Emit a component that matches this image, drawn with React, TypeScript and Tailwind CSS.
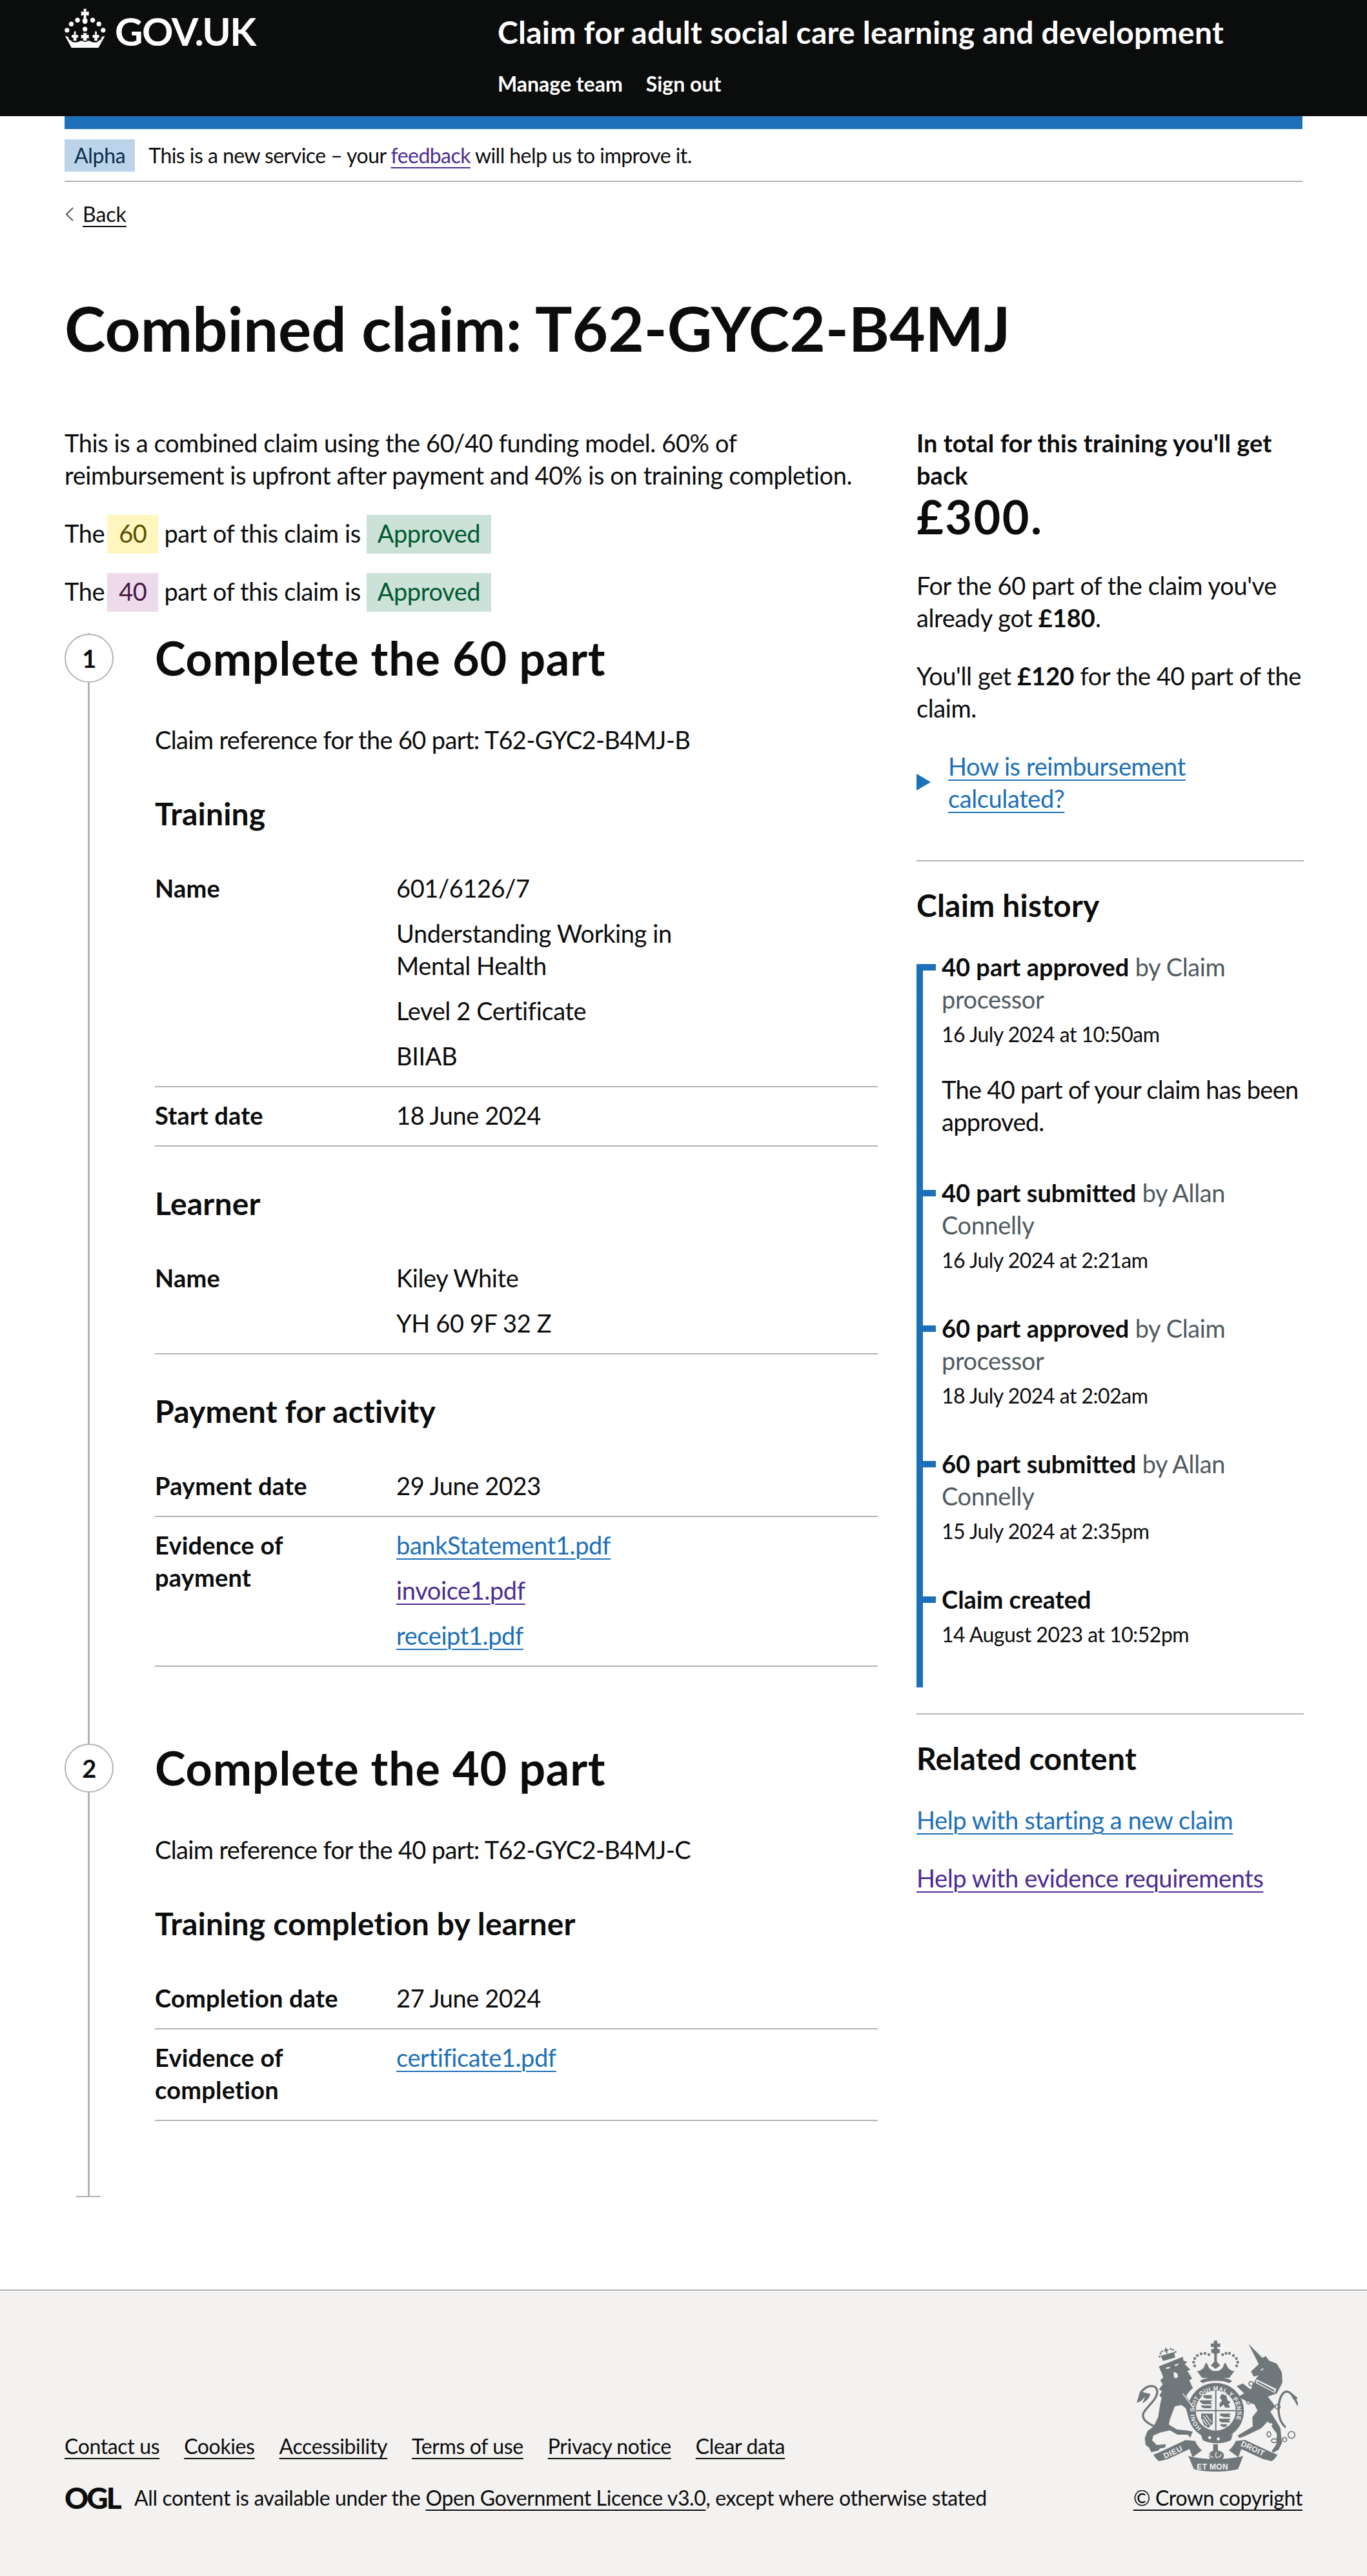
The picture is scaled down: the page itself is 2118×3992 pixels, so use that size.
import React from "react";

const font = { fontFamily: "Lato, 'Noto Sans', Arial, sans-serif" };
const C = "#6f777b";
const BG = "#f3f2f1";

const Crown = () => (
  <svg width="65" height="63" viewBox="30 20 195 190" className="shrink-0">
    <g fill="#fff">
      <path d="M118 25h14l-2 14 13-2v20l-13-2 2 14h-14l2-14-13 2V37l13 2z" />
      <ellipse cx="125" cy="82" rx="12" ry="14" />
      {[[90, 78], [161, 78], [61, 96], [190, 96], [41, 125], [210, 125], [125, 120]].map(([x, y]) => (
        <circle key={`${x}-${y}`} cx={x} cy={y} r="11" />
      ))}
      <path d="M116 138h18l-2 10 11-2v18l-11-2 2 12h-18l2-12-11 2v-18l11 2z" />
      <path d="M78 128c6 6 6 14 2 20 6-4 14-2 14 6 0 6-6 8-10 6l2 14h-16l2-14c-4 2-10 0-10-6 0-8 8-10 14-6-4-6-4-14 2-20z" />
      <path d="M176 128c6 6 6 14 2 20 6-4 14-2 14 6 0 6-6 8-10 6l2 14h-16l2-14c-4 2-10 0-10-6 0-8 8-10 14-6-4-6-4-14 2-20z" />
      <path d="M32 152l14 4 4 12 10 6 6 6 14 2 14-2 12-6 19 6 19-6 12 6 14 2 14-2 6-6 10-6 4-12 14-4-30 55H62z" />
    </g>
  </svg>
);

const Crest = () => (
  <svg width="250" height="204" viewBox="190 115 750 610" className="block">
    <g fill={C}>
      {/* lion */}
      <path d="M293 235L340 216L405 190L408 208L426 214L414 224L440 250L426 256L448 290L435 300L452 335L436 350L420 372L466 440L464 470L445 458L430 466L418 428L398 414L368 420L345 480L340 505L378 528L420 532L452 538L446 548L440 566L428 552L380 552L345 532L300 542L268 556L262 578L284 600L326 596L322 612L300 616L290 626L258 634L248 612L232 600L228 568L240 536L270 512L290 470L298 420L306 380L296 370L308 350L294 340L312 318L300 300L314 285L305 262Z" />
      <g transform="rotate(-16 335 180)">
        <path d="M302 176h66l-4 26h-58z" />
        <path d="M330 172v-10h-7v-7h7v-8h7v8h7v7h-7v10z" />
        {[296, 304, 313, 355, 364, 373].map((x, i) => (
          <circle key={x} cx={x} cy={[178, 165, 158, 158, 165, 178][i]} r="4.5" />
        ))}
      </g>
      <path d="M206 350c-6 20-8 30-16 54 14-4 26-10 38-28-2 14-6 20-14 30 18-6 34-20 40-44-14-2-32-8-48-12z" />
      {/* unicorn */}
      <path d="M710 130L775 195L790 186L806 208L842 222L865 262L868 310L842 360L800 375L835 420L812 445L858 520L866 590L850 622L826 636L818 628L840 596L842 548L800 490L770 522L700 556L668 568L660 556L690 538L730 514L728 470L752 440L738 412L700 396L662 376L690 360L655 326L684 314L720 342L746 290L756 276L734 282L722 258L758 224Z" />
      {/* crown */}
      <path d="M471 256h174l-24 32H494z" />
      <path d="M484 304c20-24 130-24 150 0l-14 8c-30-14-92-14-122 0z" />
      <path d="M549 115h16v13h14v16h-14v8l12 4v14l-14 6v36l16 18-22 16-22-16 16-18v-36l-14-6v-14l12-4v-8h-14v-16h14z" />
      <path d="M478 258l22-14 12-26 4 0 12 26 20 14zM568 258l20-14 12-26 4 0 12 26 22 14z" />
      {/* motto ribbon */}
      <path d="M268 645l30-12 120-56 44 4c6 14 16 30 32 44l-44 32-14-38-100 46-40 10c-12-4-20-18-28-30z" />
      <path d="M845 645l-30-12-120-56-44 4c-6 14-16 30-32 44l44 32 14-38 100 46 40 10c12-4 20-18 28-30z" />
      <path d="M430 650c64 20 190 20 256 0l-24 62c-60 16-150 16-206 0z" />
      <path d="M546 596h22v30c24 2 34 20 24 36-8 8-20 6-26 12h-10c-4-6-18-4-26-12-10-16 0-34 22-36h-6z" />
    </g>
    <path d="M562 632c-6 10-6 20 0 30M530 642c-2 10 6 16 18 14M582 642c2 10-6 16-18 14" fill="none" stroke={BG} strokeWidth="4" />
    <g fill="none" stroke={C} strokeLinecap="round">
      <path d="M278 515C240 500 212 478 222 452C236 420 286 392 286 350C284 320 244 316 214 350" strokeWidth="10" />
      <path d="M880 515C840 480 845 400 866 366C884 340 908 352 922 384" strokeWidth="10" />
      <path d="M925 385L938 410M912 365L932 382" strokeWidth="10" />
    </g>
    <g fill={C}>
      {[[460, 232], [455, 215], [460, 198], [472, 184], [490, 176], [508, 174], [526, 180], [590, 180], [606, 174], [622, 174], [640, 184], [654, 198], [660, 215], [655, 232]].map(([x, y]) => (
        <circle key={`${x}-${y}`} cx={x} cy={y} r="6.5" />
      ))}
    </g>
    <g fill="none" stroke={C} strokeWidth="5">
      <circle cx="722" cy="315" r="10" />
      <circle cx="712" cy="398" r="11" />
      <circle cx="846" cy="422" r="11" />
      <ellipse cx="805" cy="550" rx="9" ry="12" />
      <ellipse cx="830" cy="580" rx="13" ry="9" />
      <circle cx="878" cy="575" r="10" />
      <circle cx="910" cy="553" r="16" />
    </g>
    <circle cx="836" cy="467" r="7" fill={BG} />
    <circle cx="814" cy="505" r="7" fill={BG} />
    {/* collar */}
    <path d="M748 295L840 340L832 358L744 312Z" fill={BG} />
    <path d="M752 303L832 345L828 352L750 310Z" fill={C} />
    {/* faces */}
    <path d="M325 240l22-4-4 8-14 2zM366 228l20-8-4 8-12 6z" fill={BG} />
    <path d="M362 262c10-2 22 6 20 20-2 8-14 10-18 2z" fill={BG} />
    <path d="M766 250l14-8-2 8-10 4z" fill={BG} />
    {/* garter and shield */}
    <circle cx="558" cy="442" r="131" fill={C} />
    <path d="M405 362L455 428" stroke={BG} strokeWidth="4" />
    <path id="garter" d="M492 522A100 100 0 1 1 624 522" fill="none" />
    <circle cx="558" cy="440" r="93" fill={BG} />
    <path d="M466 437H650V443H466ZM555 347H561V533H555Z" fill={C} />
    <g fill={C}>
      <path d="M500 368h44l-8 8 8 8h-30l-14-6zM485 392h58l-10 10 10 8h-44l-14-10zM490 416h52l-8 7 8 6h-36l-16-6z" />
      <path d="M585 362l22 8 6 22 14 8-10 10 8 16h-24l-6-14-18 14-2-18 12-14-10-14z" />
      <path d="M490 454h54v48l-20 18-20-12-14-34z" />
      <path d="M578 454h50l-8 8 8 8h-30l-20-6zM574 478h54l-10 9 10 8h-44l-10-8zM580 503h34l-8 7 4 6h-20l-10-6z" />
    </g>
    <path d="M500 464l32 44M512 460l26 34M498 480l20 28" stroke={BG} strokeWidth="4" />
    <path d="M488 548c30 22 110 26 150 0l-10 30c-40 18-90 18-130 0z" fill={C} />
    <circle cx="530" cy="566" r="7" fill={BG} />
    <circle cx="570" cy="572" r="7" fill={BG} />
    <text fill={BG} fontFamily="Liberation Sans, sans-serif" fontWeight="700" fontSize="28" letterSpacing="1.5">
      <textPath href="#garter">HONI SOIT QUI MAL Y PENSE</textPath>
    </text>
    <g fill={BG} fontFamily="Liberation Sans, sans-serif" fontWeight="700" fontSize="36">
      <text x="322" y="664" transform="rotate(-25 322 664)" letterSpacing="2">DIEU</text>
      <text x="470" y="714" letterSpacing="1">ET MON</text>
      <text x="672" y="603" transform="rotate(25 672 603)" letterSpacing="1">DROIT</text>
    </g>
  </svg>
);

const Tag = ({ className, children }: { className: string; children: React.ReactNode }) => (
  <span className={`inline-flex items-center h-[60px] pb-1 ${className}`}>{children}</span>
);

// the rows sit 2px high in their padding so Lato lines up with the reference's baselines
const Row = ({ label, children }: { label: React.ReactNode; children: React.ReactNode }) => (
  <div className="flex border-b-2 border-[#b1b4b6] pt-[18px] pb-[22px]">
    <div className="w-[374px] shrink-0 pr-10 font-bold tracking-[0.2px]">{label}</div>
    <div className="flex flex-col gap-5">{children}</div>
  </div>
);

const Link = ({ visited, children }: { visited?: boolean; children: React.ReactNode }) => (
  <a className={`underline decoration-2 underline-offset-[6px] ${visited ? "text-[#4c2c92]" : "text-[#1d70b8]"}`}>
    {children}
  </a>
);

const Step = ({ num, title, children }: { num: number; title: string; children: React.ReactNode }) => (
  <div className="relative pl-[140px] pb-[118px]">
    <div className="absolute left-[36px] top-0 bottom-0 w-[3px] bg-[#b1b4b6]" />
    <div className="absolute left-0 top-[1px] w-[76px] h-[76px] rounded-full border-2 border-[#b1b4b6] bg-white flex items-center justify-center text-[38px] font-bold">
      {num}
    </div>
    {num === 2 && <div className="absolute left-[18px] bottom-0 w-[38px] h-[2px] bg-[#b1b4b6]" />}
    <h2 className="text-[72px] leading-[76px] font-bold tracking-[0.75px]">{title}</h2>
    {children}
  </div>
);

const SubHeading = ({ children }: { children: React.ReactNode }) => (
  <h3 className="text-[48px] leading-[60px] font-bold tracking-[0.2px] mt-[58px] mb-[42px]">{children}</h3>
);

const PartLine = ({ part, className }: { part: string; className: string }) => (
  <div className="flex items-center gap-[9px]">
    <span className="mb-1 -mr-[5px]">The</span>
    <Tag className={`px-[18px] ${className}`}>{part}</Tag>
    <span className="mb-1">part of this claim is</span>
    <Tag className="px-[17px] bg-[#cce2d8] text-[#005a30]">Approved</Tag>
  </div>
);

const history = [
  { title: "40 part approved", by: "by Claim processor", date: "16 July 2024 at 10:50am", note: "The 40 part of your claim has been approved." },
  { title: "40 part submitted", by: "by Allan Connelly", date: "16 July 2024 at 2:21am" },
  { title: "60 part approved", by: "by Claim processor", date: "18 July 2024 at 2:02am" },
  { title: "60 part submitted", by: "by Allan Connelly", date: "15 July 2024 at 2:35pm" },
  { title: "Claim created", by: "", date: "14 August 2023 at 10:52pm" },
];

const footerLinks = ["Contact us", "Cookies", "Accessibility", "Terms of use", "Privacy notice", "Clear data"];

const Sidebar = () => (
  <div className="w-[600px] shrink-0">
    <p className="font-bold tracking-[0.05px]">In total for this training you'll get back</p>
    <p className="text-[72px] leading-[80px] font-bold tracking-[2.5px] -mt-[1px]">£300.</p>
    <p className="mt-[42px]">
      For the 60 part of the claim you've already got <b className="tracking-normal">£180</b>.
    </p>
    <p className="mt-10">
      You'll get <b className="tracking-normal">£120</b> for the 40 part of the claim.
    </p>
    <div className="mt-10 flex items-center">
      <svg width="22" height="26" viewBox="0 0 22 26" className="shrink-0">
        <path d="M0 0l22 13L0 26z" fill="#1d70b8" />
      </svg>
      <span className="ml-[27px] w-[400px]">
        <Link>How is reimbursement calculated?</Link>
      </span>
    </div>
    <div className="mt-[71px] border-t-2 border-[#b1b4b6] pt-[38px]">
      <h2 className="text-[48px] leading-[60px] font-bold tracking-[0.2px]">Claim history</h2>
      <div className="relative mt-10 pb-[2px] pl-[39px]">
        <div className="absolute left-0 top-[21px] bottom-0 w-[10px] bg-[#1d70b8]" />
        {history.map((item) => (
          <div key={item.title} className="relative pb-[60px]">
            <div className="absolute -left-[39px] top-[21px] w-[30px] h-[10px] bg-[#1d70b8]" />
            <p className="text-[#505a5f] pr-[60px]">
              <b className="text-[#0b0c0c] tracking-normal">{item.title}</b> {item.by}
            </p>
            <p className="text-[32px] leading-[40px] tracking-[-0.5px] mt-[10px]">{item.date}</p>
            {item.note && <p className="mt-10 tracking-[-0.7px]">{item.note}</p>}
          </div>
        ))}
      </div>
    </div>
    <div className="mt-10 border-t-2 border-[#b1b4b6] pt-[38px]">
      <h2 className="text-[48px] leading-[60px] font-bold tracking-[0.2px]">Related content</h2>
      <p className="mt-10">
        <Link>Help with starting a new claim</Link>
      </p>
      <p className="mt-10">
        <Link visited>Help with evidence requirements</Link>
      </p>
    </div>
  </div>
);

export default function App() {
  return (
    <div className="w-[2118px] min-h-[3992px] bg-white text-[#0b0c0c] text-[38px] leading-[50px] tracking-[-0.4px]" style={font}>
      <header className="h-[180px] bg-[#0b0c0c] text-white px-[100px] flex tracking-normal">
        <div className="w-[671px] shrink-0 flex items-start pt-[12px]">
          <Crown />
          <span className="ml-[13px] text-[60px] leading-[66px] font-bold tracking-[-1.5px] mt-[3px]">GOV.UK</span>
        </div>
        <div>
          <div className="text-[48px] leading-[60px] font-bold tracking-[0.25px] mt-5">Claim for adult social care learning and development</div>
          <nav className="flex gap-[36px] text-[32px] leading-[40px] font-bold mt-[30px]">
            <span>Manage team</span>
            <span>Sign out</span>
          </nav>
        </div>
      </header>

      <div className="px-[100px]">
        <div className="h-5 bg-[#1d70b8]" />
        <div className="mt-4 pb-[14px] border-b-2 border-[#b1b4b6] flex items-center text-[32px] leading-[40px] tracking-[-0.55px]">
          <span className="h-[50px] px-[15px] flex items-center bg-[#bbd4ea] text-[#0c2d4a] tracking-[-0.3px]">Alpha</span>
          <span className="ml-[21px]">
            This is a new service – your{" "}
            <a className="text-[#4c2c92] underline decoration-2 underline-offset-[6px]">feedback</a> will help us to improve it.
          </span>
        </div>
        <div className="mt-[30px] flex items-center text-[32px] leading-[40px] tracking-normal">
          <svg width="15" height="22" viewBox="0 0 15 22" className="shrink-0">
            <path d="M13 1L3 11l10 10" fill="none" stroke="#505a5f" strokeWidth="2" />
          </svg>
          <a className="ml-[13px] underline decoration-2 underline-offset-[6px]">Back</a>
        </div>

        <main>
          <h1 className="mt-[106px] text-[96px] leading-[100px] font-bold tracking-normal">Combined claim: T62-GYC2-B4MJ</h1>
          <div className="mt-[103px] flex gap-[60px]">
            <div className="w-[1260px] shrink-0">
              <p className="mb-[37px]">This is a combined claim using the 60/40 funding model. 60% of reimbursement is upfront after payment and 40% is on training completion.</p>
              <PartLine part="60" className="bg-[#fff7bf] text-[#594d00]" />
              <div className="h-[30px]" />
              <PartLine part="40" className="bg-[#eddbec] text-[#491644]" />
              <div className="mt-[33px]">
                <Step num={1} title="Complete the 60 part">
                  <p className="mt-[64px] pb-[2px] tracking-[-0.65px]">Claim reference for the 60 part: T62-GYC2-B4MJ-B</p>
                  <SubHeading>Training</SubHeading>
                  <Row label="Name">
                    <p>601/6126/7</p>
                    <p className="w-[480px]">Understanding Working in Mental Health</p>
                    <p>Level 2 Certificate</p>
                    <p>BIIAB</p>
                  </Row>
                  <Row label="Start date">
                    <p>18 June 2024</p>
                  </Row>
                  <SubHeading>Learner</SubHeading>
                  <Row label="Name">
                    <p>Kiley White</p>
                    <p>YH 60 9F 32 Z</p>
                  </Row>
                  <SubHeading>Payment for activity</SubHeading>
                  <Row label="Payment date">
                    <p>29 June 2023</p>
                  </Row>
                  <Row label="Evidence of payment">
                    <p><Link>bankStatement1.pdf</Link></p>
                    <p><Link visited>invoice1.pdf</Link></p>
                    <p><Link>receipt1.pdf</Link></p>
                  </Row>
                </Step>
                <Step num={2} title="Complete the 40 part">
                  <p className="mt-[64px] pb-[2px] tracking-[-0.65px]">Claim reference for the 40 part: T62-GYC2-B4MJ-C</p>
                  <SubHeading>Training completion by learner</SubHeading>
                  <Row label="Completion date">
                    <p>27 June 2024</p>
                  </Row>
                  <Row label="Evidence of completion">
                    <p><Link>certificate1.pdf</Link></p>
                  </Row>
                </Step>
              </div>
            </div>
            <Sidebar />
          </div>
        </main>
      </div>

      <footer className="mt-[143px] h-[445px] bg-[#f3f2f1] border-t-2 border-[#b1b4b6] px-[100px] pb-[102px] flex items-end justify-between text-[32px] leading-[40px] tracking-[-0.37px]">
        <div>
          <div className="flex gap-[38px]">
            {footerLinks.map((l) => (
              <a key={l} className="underline decoration-2 underline-offset-[6px]">{l}</a>
            ))}
          </div>
          <div className="mt-10 flex items-center">
            <span className="w-[82px] text-[46px] leading-[40px] font-black tracking-[-3px]">OGL</span>
            <span className="ml-[26px]">
              All content is available under the{" "}
              <a className="underline decoration-2 underline-offset-[6px]">Open Government Licence v3.0</a>, except where otherwise stated
            </span>
          </div>
        </div>
        <div className="flex flex-col items-end">
          <div className="mr-[7px]"><Crest /></div>
          <a className="mt-5 underline decoration-2 underline-offset-[6px]">© Crown copyright</a>
        </div>
      </footer>
    </div>
  );
}
